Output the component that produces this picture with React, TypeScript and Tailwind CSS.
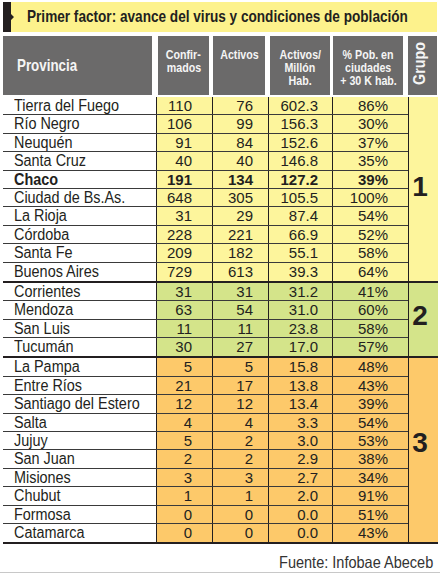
import React from "react";

type Row = { n: string; c: string; a: string; m: string; p: string; b?: boolean };

const g1: Row[] = [
  { n: "Tierra del Fuego", c: "110", a: "76", m: "602.3", p: "86%" },
  { n: "Río Negro", c: "106", a: "99", m: "156.3", p: "30%" },
  { n: "Neuquén", c: "91", a: "84", m: "152.6", p: "37%" },
  { n: "Santa Cruz", c: "40", a: "40", m: "146.8", p: "35%" },
  { n: "Chaco", c: "191", a: "134", m: "127.2", p: "39%", b: true },
  { n: "Ciudad de Bs.As.", c: "648", a: "305", m: "105.5", p: "100%" },
  { n: "La Rioja", c: "31", a: "29", m: "87.4", p: "54%" },
  { n: "Córdoba", c: "228", a: "221", m: "66.9", p: "52%" },
  { n: "Santa Fe", c: "209", a: "182", m: "55.1", p: "58%" },
  { n: "Buenos Aires", c: "729", a: "613", m: "39.3", p: "64%" },
];
const g2: Row[] = [
  { n: "Corrientes", c: "31", a: "31", m: "31.2", p: "41%" },
  { n: "Mendoza", c: "63", a: "54", m: "31.0", p: "60%" },
  { n: "San Luis", c: "11", a: "11", m: "23.8", p: "58%" },
  { n: "Tucumán", c: "30", a: "27", m: "17.0", p: "57%" },
];
const g3: Row[] = [
  { n: "La Pampa", c: "5", a: "5", m: "15.8", p: "48%" },
  { n: "Entre Ríos", c: "21", a: "17", m: "13.8", p: "43%" },
  { n: "Santiago del Estero", c: "12", a: "12", m: "13.4", p: "39%" },
  { n: "Salta", c: "4", a: "4", m: "3.3", p: "54%" },
  { n: "Jujuy", c: "5", a: "2", m: "3.0", p: "53%" },
  { n: "San Juan", c: "2", a: "2", m: "2.9", p: "38%" },
  { n: "Misiones", c: "3", a: "3", m: "2.7", p: "34%" },
  { n: "Chubut", c: "1", a: "1", m: "2.0", p: "91%" },
  { n: "Formosa", c: "0", a: "0", m: "0.0", p: "51%" },
  { n: "Catamarca", c: "0", a: "0", m: "0.0", p: "43%" },
];

function Group({ rows, bg, num, numPad }: { rows: Row[]; bg: string; num: string; numPad: string }) {
  return (
    <div className="flex border-b-2 border-[#231f20]">
      <div className="flex flex-col w-[405px]">
        {rows.map((r, i) => (
          <div
            key={r.n}
            className={
              "flex h-[18.4px] leading-[18px] " +
              (i < rows.length - 1 ? "border-b border-[#3a3a3a]" : "") +
              (r.b ? " font-bold" : "")
            }
          >
            <div className="w-[153px] bg-white pl-[11px] text-[16px] whitespace-nowrap">
              <span className="inline-block origin-left scale-x-[0.9]">{r.n}</span>
            </div>
            <div className={"w-[56px] border-l border-[#231f20] text-right pr-[20px] text-[15px] " + bg}>{r.c}</div>
            <div className={"w-[56px] border-l border-[#231f20] text-right pr-[15px] text-[15px] " + bg}>{r.a}</div>
            <div className={"w-[64px] border-l border-[#231f20] text-right pr-[14px] text-[15px] " + bg}>{r.m}</div>
            <div className={"w-[76px] border-l border-[#231f20] text-right pr-[20px] text-[15px] " + bg}>{r.p}</div>
          </div>
        ))}
      </div>
      <div className={"w-[30px] border-l border-[#231f20] flex items-center justify-center pr-[7px] " + bg}>
        <span className={"text-[28px] leading-none font-bold " + numPad}>{num}</span>
      </div>
    </div>
  );
}

export default function App() {
  return (
    <div className="w-[440px] h-[573px] bg-white overflow-hidden text-[#231f20] flex flex-col font-['Liberation_Sans',Arial,sans-serif]">
      <div className="mt-[2px] ml-[3px] w-[434px] h-[30px] shrink-0 flex items-center bg-[#fdf28c] whitespace-nowrap">
        <svg width="11" height="30" viewBox="0 0 11 30" className="shrink-0">
          <path d="M0 0H8V12L11 15L8 18V30H0Z" fill="#231f20" />
        </svg>
        <span className="ml-[13px] inline-block origin-left scale-x-[0.8] font-bold text-[17px]">
          Primer factor: avance del virus y condiciones de población
        </span>
      </div>

      <div className="mt-[4px] h-[59px] shrink-0 flex pl-[3px] text-[#f5f5f5] font-bold whitespace-nowrap">
        <div className="w-[149px] bg-[#6b6a6a] flex items-center pl-[14px] text-[16.5px]">
          <span className="inline-block origin-left scale-x-[0.81]">Provincia</span>
        </div>
        <div className="ml-[6px] w-[51px] bg-[#6b6a6a] flex flex-col items-center pt-[12px] text-[13px] leading-[13px]">
          <span className="inline-block scale-x-[0.82]">Confir-</span>
          <span className="inline-block scale-x-[0.82]">mados</span>
        </div>
        <div className="ml-[4px] w-[52px] bg-[#6b6a6a] flex flex-col items-center pt-[12px] text-[13px] leading-[13px]">
          <span className="inline-block scale-x-[0.82]">Activos</span>
        </div>
        <div className="ml-[5px] w-[60px] bg-[#6b6a6a] flex flex-col items-center pt-[12px] text-[13px] leading-[13px]">
          <span className="inline-block scale-x-[0.82]">Activos/</span>
          <span className="inline-block scale-x-[0.82]">Millón</span>
          <span className="inline-block scale-x-[0.82]">Hab.</span>
        </div>
        <div className="ml-[3px] w-[70px] bg-[#6b6a6a] flex flex-col items-center pt-[12px] text-[13px] leading-[13px]">
          <span className="inline-block scale-x-[0.82]">% Pob. en</span>
          <span className="inline-block scale-x-[0.82]">ciudades</span>
          <span className="inline-block scale-x-[0.82]">+ 30 K hab.</span>
        </div>
        <div className="ml-[5px] w-[29px] bg-[#6b6a6a] flex items-end justify-center pb-[2px] pr-[6px]">
          <span className="inline-block [writing-mode:vertical-rl] rotate-180 origin-center scale-y-[0.84] translate-y-[-4px] text-[17px] leading-none">
            Grupo
          </span>
        </div>
      </div>

      <div className="mt-[2px] ml-[3px] w-[435px] shrink-0">
        <Group rows={g1} bg="bg-[#fdf59c]" num="1" numPad="pb-[4px]" />
        <Group rows={g2} bg="bg-[#d4e48a]" num="2" numPad="pb-[8px]" />
        <Group rows={g3} bg="bg-[#fdc96a]" num="3" numPad="pb-[14px]" />
      </div>

      <div className="h-[28px] shrink-0 flex justify-end pr-[7px] pt-[8px] leading-[20px] text-[16.5px] text-[#333] whitespace-nowrap">
        <span className="inline-block origin-right scale-x-[0.88]">Fuente: Infobae Abeceb</span>
      </div>
      <div className="h-[2px] shrink-0 bg-[#c8c8c8]" />
    </div>
  );
}
